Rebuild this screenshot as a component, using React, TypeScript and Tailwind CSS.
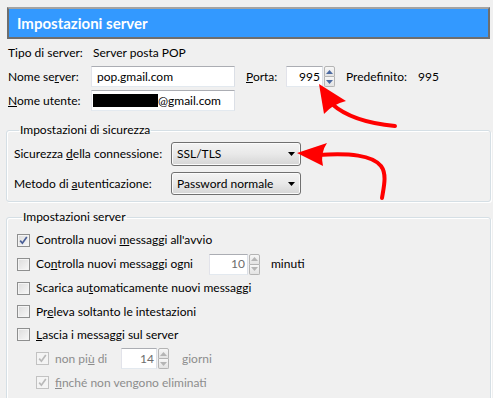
import React from "react";

function Tri({ up, color }: { up: boolean; color: string }) {
  return (
    <svg width="7" height="4" viewBox="0 0 7 4">
      {up ? <path d="M0 4 L3.5 0 L7 4 Z" fill={color} /> : <path d="M0 0 L3.5 4 L7 0 Z" fill={color} />}
    </svg>
  );
}

function Spinner({ disabled }: { disabled?: boolean }) {
  const c = disabled ? "#b5b5b5" : "#4d6aa0";
  return (
    <div className="flex flex-col h-[21px] w-[11px] ml-[1px]">
      <div className="flex-1 flex items-center justify-center border border-[#b4b4b4] rounded-t-[2px] bg-gradient-to-b from-[#f7f7f7] to-[#e3e3e3]">
        <Tri up color={c} />
      </div>
      <div className="flex-1 flex items-center justify-center border border-t-0 border-[#b4b4b4] rounded-b-[2px] bg-gradient-to-b from-[#f7f7f7] to-[#e3e3e3]">
        <Tri up={false} color={c} />
      </div>
    </div>
  );
}

function Check({ checked, disabled }: { checked?: boolean; disabled?: boolean }) {
  return (
    <div
      className={
        disabled
          ? "w-[13px] h-[13px] border border-[#c2c2c2] bg-[#f4f4f4] flex items-center justify-center shrink-0"
          : "w-[13px] h-[13px] border border-[#8e8f8f] bg-gradient-to-br from-[#dcdcdc] to-[#f8f8f8] shadow-[inset_0_0_0_1px_#f4f4f4] flex items-center justify-center shrink-0"
      }
    >
      {checked && (
        <svg width="9" height="9" viewBox="0 0 9 9">
          <path
            d="M1.2 4.6 L3.4 7.2 L7.8 1"
            fill="none"
            stroke={disabled ? "#b9b9b9" : "#4a5f97"}
            strokeWidth="1.7"
          />
        </svg>
      )}
    </div>
  );
}

function Select({ text, h }: { text: string; h: string }) {
  return (
    <div
      className={
        h +
        " w-[130px] border border-[#707070] rounded-[3px] bg-gradient-to-b from-[#f3f3f3] via-[#e9e9e9] to-[#d5d5d5] shadow-[inset_0_0_0_1px_#fbfbfb] flex items-center pl-[5px] pr-[5px]"
      }
    >
      <span className="flex-1">{text}</span>
      <svg width="7" height="4" viewBox="0 0 7 4">
        <path d="M0 0 L3.5 4 L7 0 Z" fill="#000" />
      </svg>
    </div>
  );
}

const box =
  "bg-white border border-[#abadb3] border-l-[#e2e3ea] border-r-[#dbdfe6] border-b-[#e3e9ef]";

export default function App() {
  return (
    <div className="relative w-[493px] h-[398px] overflow-hidden bg-[#f0f0f0] text-[12px] leading-[16px] text-black font-['Lato',sans-serif]">
      <div className="pt-[7px] pl-[7px]">
        <div className="w-[483px] h-[32px] border-2 border-[#6e6e6e] border-t-[#a3a3a3] bg-[#3399ff] flex items-center pl-[8px]">
          <span className="text-white font-bold text-[15px] leading-[18px]">Impostazioni server</span>
        </div>
      </div>

      <div className="pl-[8px] mt-[5px]">
        <div className="flex items-center h-[18px]">
          <span className="w-[85px]">Tipo di server:</span>
          <span>Server posta POP</span>
        </div>
        <div className="flex items-center h-[21px] mt-[4px]">
          <span className="w-[83px]">
            Nome se<u>r</u>ver:
          </span>
          <div className={box + " w-[144px] h-[21px] flex items-center pl-[5px]"}>pop.gmail.com</div>
          <span className="ml-[11px] w-[40px]">
            <u>P</u>orta:
          </span>
          <div className={box + " w-[37px] h-[21px] flex items-center justify-end pr-[2px]"}>995</div>
          <Spinner />
          <span className="ml-[11px] w-[72px]">Predefinito:</span>
          <span>995</span>
        </div>
        <div className="flex items-center h-[21px] mt-[3px]">
          <span className="w-[83px]">
            <u>N</u>ome utente:
          </span>
          <div className={box + " w-[144px] h-[21px] flex items-center pl-[1px]"}>
            <div className="w-[65px] h-[13px] bg-black" />
            <span>@gmail.com</span>
          </div>
        </div>
      </div>

      <fieldset className="ml-[6px] mt-[11px] w-[485px] border border-[#d5dfe5] rounded-[3px] shadow-[inset_1px_1px_0_#fff,1px_1px_0_#fff] pl-[7px] pt-[4px] pb-[6px]">
        <legend className="ml-[5px] px-[1px] leading-[16px]">Impostazioni di sicurezza</legend>
        <div className="flex items-center">
          <span className="w-[157px] whitespace-nowrap">
            Sicurezza <u>d</u>ella connessione:
          </span>
          <Select text="SSL/TLS" h="h-[24px]" />
        </div>
        <div className="flex items-center mt-[6px]">
          <span className="w-[157px] whitespace-nowrap">
            Metodo di <u>a</u>utenticazione:
          </span>
          <Select text="Password normale" h="h-[23px]" />
        </div>
      </fieldset>

      <fieldset className="ml-[6px] mt-[7px] w-[485px] h-[200px] border border-[#d5dfe5] rounded-[3px] shadow-[inset_1px_1px_0_#fff,1px_1px_0_#fff] pl-[10px] pt-[3px]">
        <legend className="ml-[5px] px-[1px] leading-[16px]">Impostazioni server</legend>
        <div className="flex items-center h-[24px] gap-[6px]">
          <Check checked />
          <span>
            Controlla nuovi <u>m</u>essaggi all'avvio
          </span>
        </div>
        <div className="flex items-center h-[24px]">
          <Check />
          <span className="ml-[6px] w-[173px] whitespace-nowrap">
            Co<u>n</u>trolla nuovi messaggi ogni
          </span>
          <div className={box + " w-[39px] h-[21px] flex items-center justify-end pr-[2px] text-[#6d6d6d]"}>10</div>
          <Spinner disabled />
          <span className="ml-[11px]">minuti</span>
        </div>
        <div className="flex items-center h-[24px] gap-[6px]">
          <Check />
          <span>
            Scarica au<u>t</u>omaticamente nuovi messaggi
          </span>
        </div>
        <div className="flex items-center h-[23px] gap-[6px]">
          <Check />
          <span>
            Pr<u>e</u>leva soltanto le intestazioni
          </span>
        </div>
        <div className="flex items-center h-[23px] gap-[6px]">
          <Check />
          <span>
            <u>L</u>ascia i messaggi sul server
          </span>
        </div>
        <div className="flex items-center h-[25px] pl-[19px] text-[#8d8d8d]">
          <Check checked disabled />
          <span className="ml-[6px] w-[66px]">
            non pi<u>ù</u> di
          </span>
          <div className={box + " w-[36px] h-[21px] flex items-center justify-end pr-[2px] text-[#6d6d6d]"}>14</div>
          <Spinner disabled />
          <span className="ml-[13px]">giorni</span>
        </div>
        <div className="flex items-center h-[23px] pl-[19px] gap-[6px] text-[#8d8d8d]">
          <Check checked disabled />
          <span>
            <u>f</u>inché non vengono eliminati
          </span>
        </div>
      </fieldset>

      <svg className="absolute left-0 top-0 pointer-events-none" width="493" height="398" viewBox="0 0 493 398">
        <path d="M332 104 Q 352 122 395 126" fill="none" stroke="#ff0000" strokeWidth="4" strokeLinecap="round" />
        <path d="M319 84 L346 101 Q 333 104 324 114 Z" fill="#ff0000" />
        <path d="M318 155 C 350 153 372 155 381 166 C 387 174 384 186 382 198" fill="none" stroke="#ff0000" strokeWidth="4" strokeLinecap="round" />
        <path d="M297 153 L327 143 Q 320 153 323 166 Z" fill="#ff0000" />
      </svg>
    </div>
  );
}
